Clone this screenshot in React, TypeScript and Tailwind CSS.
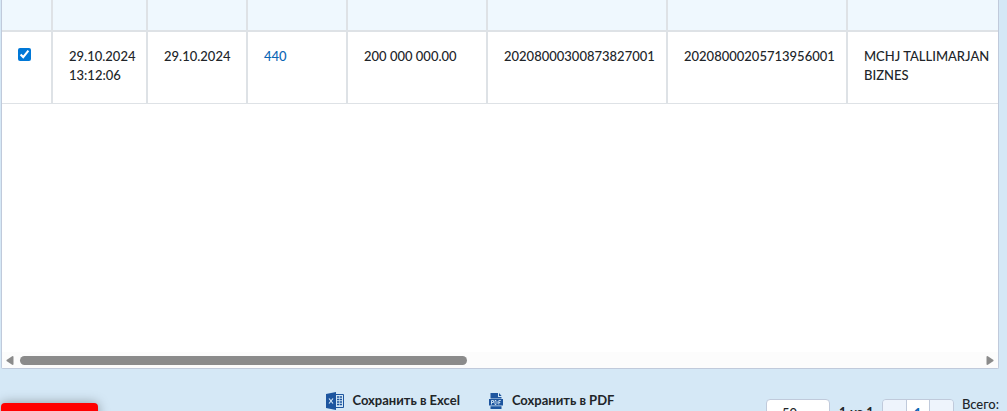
import React, { useState } from 'react';

const ROWS = [
  {
    created: '29.10.2024 13:12:06',
    date: '29.10.2024',
    num: '440',
    amount: '200 000 000.00',
    debit: '20208000300873827001',
    credit: '20208000205713956001',
    client: 'MCHJ TALLIMARJAN BIZNES',
  },
];

const HEADERS = ['select', 'created', 'date', 'num', 'amount', 'debit', 'credit', 'client'];

const CELL = 'px-4 pt-[15px] align-top border-r-2 border-b border-[#dee2e6]';

function ExcelIcon() {
  return (
    <svg className="w-[18px] h-[18px] shrink-0" viewBox="0 0 18 18" aria-hidden="true">
      <path d="M0 2 L10 0 V18 L0 16 Z" fill="#1d559f" />
      <path d="M10 2.5 H17.5 V15.5 H10" fill="#d5e8f6" stroke="#1d559f" />
      <path d="M11 5 H16 M11 7.5 H16 M11 10 H16 M11 12.5 H16" stroke="#1d559f" strokeWidth="1.3" strokeDasharray="2.2 0.6" />
      <path d="M3 6.5 L7 11.5 M7 6.5 L3 11.5" stroke="#d5e8f6" strokeWidth="1.2" />
    </svg>
  );
}

function PdfIcon() {
  return (
    <svg className="w-[15px] h-4 shrink-0" viewBox="0 0 15 16" aria-hidden="true">
      <path d="M1.5 0 H9 V4 H12.5 V5.5 H1.5 Z M10 0 L12.7 3 H10 Z" fill="#1d559f" />
      <path d="M0 6 H14 V12.5 H0 Z M1.5 13.3 H12.5 V16 H1.5 Z" fill="#1d559f" />
      <path
        d="M2.5 11.5 V7.5 H4.5 V9.5 H2.5 M6 7.5 H7 L8 8.5 V10.5 L7 11.5 H6 Z M11.8 7.5 H9.8 V11.5 M9.8 9.5 H11.3"
        fill="none"
        stroke="#d5e8f6"
        strokeWidth="0.9"
      />
    </svg>
  );
}

function ScrollBar() {
  return (
    <div className="h-4 shrink-0 bg-[#fcfcfc] flex items-center gap-1.5 px-1">
      <svg className="w-2 h-[9px] shrink-0" viewBox="0 0 8 9" aria-hidden="true">
        <path d="M7.5 0.5 V8.5 L6.5 9 L0.5 5 V4 L6.5 0 Z" fill="#8b8b8b" />
      </svg>
      <div className="flex-1 h-[9px]">
        <div className="w-[46.6%] h-full rounded-full bg-[#8b8b8b]" />
      </div>
      <svg className="w-2 h-[9px] shrink-0" viewBox="0 0 8 9" aria-hidden="true">
        <path d="M0.5 0.5 V8.5 L1.5 9 L7.5 5 V4 L1.5 0 Z" fill="#8b8b8b" />
      </svg>
    </div>
  );
}

export default function App() {
  const [checked, setChecked] = useState(true);

  return (
    <div className="h-screen overflow-hidden flex flex-col bg-[#d5e8f6] text-[#212529] text-[13px] leading-[19px] font-medium font-['Lato','Open_Sans',sans-serif]">
      {/* Documents table */}
      <div className="flex-1 min-h-0 ml-px mr-2 flex flex-col bg-white border border-t-0 border-[#c0cadb] rounded-b-xs overflow-hidden">
        <div className="flex-1 min-h-0 overflow-hidden">
          <table className="w-full table-fixed border-separate border-spacing-0">
            <colgroup>
              <col className="w-[51px]" />
              <col className="w-[95px]" />
              <col className="w-[100px]" />
              <col className="w-[100px]" />
              <col className="w-[140px]" />
              <col className="w-[180px]" />
              <col className="w-[180px]" />
              <col />
            </colgroup>
            <thead>
              <tr>
                {HEADERS.map((name) => (
                  <th
                    key={name}
                    className="h-8 bg-[#eff8fe] border-r-2 border-b-2 border-[#dee2e6] last:border-r-0"
                  />
                ))}
              </tr>
            </thead>
            <tbody>
              {ROWS.map((row) => (
                <tr key={row.num} className="h-[72px]">
                  <td className="px-4 pt-4 align-top border-r-2 border-b border-[#dee2e6]">
                    <input
                      type="checkbox"
                      aria-label={row.num}
                      checked={checked}
                      onChange={() => setChecked(!checked)}
                      className="block size-[13px] accent-[#0078d7]"
                    />
                  </td>
                  <td className="pl-4 pr-2 pt-[15px] align-top border-r-2 border-b border-[#dee2e6]">{row.created}</td>
                  <td className={CELL}>{row.date}</td>
                  <td className={CELL}>
                    <a href="#" className="text-[#0b66b5]">{row.num}</a>
                  </td>
                  <td className={CELL}>{row.amount}</td>
                  <td className={CELL}>{row.debit}</td>
                  <td className={CELL}>{row.credit}</td>
                  <td className="pl-4 pr-2 pt-[15px] align-top border-b border-[#dee2e6]">{row.client}</td>
                </tr>
              ))}
            </tbody>
          </table>
        </div>
        <ScrollBar />
      </div>

      {/* Export and paging */}
      <div className="h-[42px] shrink-0 flex items-start pl-px pr-2">
        <div className="flex-[11] pt-[34px]">
          <button
            type="button"
            aria-label="Действие"
            className="block w-[97px] h-9 rounded-sm bg-[#ff0000] shadow-[0_0_12px_rgba(0,0,0,0.35)]"
          />
        </div>
        <div className="flex gap-[29px] pt-[22px] font-bold">
          <button type="button" className="flex items-center gap-2">
            <ExcelIcon />
            Сохранить в Excel
          </button>
          <button type="button" className="flex items-center gap-2">
            <PdfIcon />
            Сохранить в PDF
          </button>
        </div>
        <div className="flex-[13] flex justify-end items-start pt-[30px]">
          <select
            aria-label="Строк на странице"
            className="w-16 h-8 px-[15px] pb-1 appearance-none rounded-sm bg-white border border-[#c0cadb] text-[13px]"
          >
            <option>50</option>
          </select>
          <span className="ml-[9px] pt-1 font-bold whitespace-nowrap">1 из 1</span>
          <div className="ml-2 w-[72px] flex h-8 rounded-sm border border-[#c0cadb] overflow-hidden">
            <button type="button" className="flex-1 bg-[#eef4fc] text-[#b4c0d0]">‹</button>
            <button type="button" className="flex-1 pb-1 bg-white border-x border-[#c0cadb] font-bold text-[#0b66b5]">1</button>
            <button type="button" className="flex-1 bg-[#eef4fc] text-[#b4c0d0]">›</button>
          </div>
          <span className="ml-2 -mt-1">Всего:</span>
        </div>
      </div>
    </div>
  );
}
